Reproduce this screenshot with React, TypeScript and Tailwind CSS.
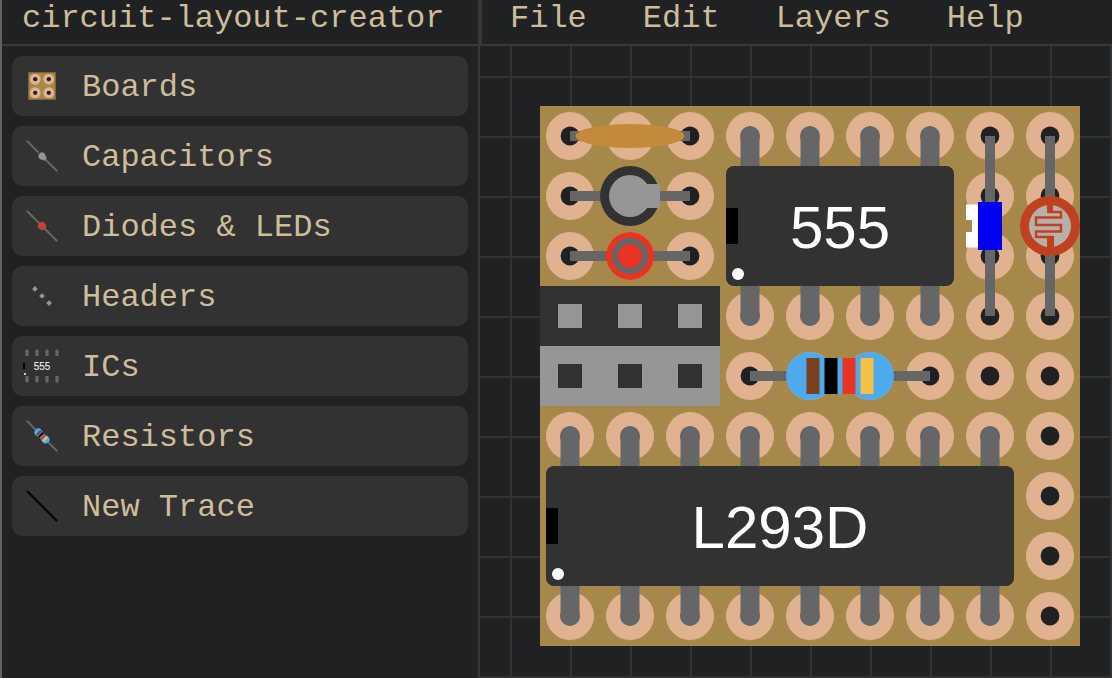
import type { ReactNode } from "react";

const PITCH = 60;
const COPPER = "#e0b290";
const BOARD = "#a6884a";
const HOLE = "#202122";
const LEAD = "#666666";
const BODY = "#323232";
const METAL = "#969696";

const range = (n: number) => Array.from({ length: n }, (_, i) => i);

type Point = { x: number; y: number };

/* ---------- Parts: the origin of each is its centre ---------- */

function Perfboard({ cols, rows }: { cols: number; rows: number }) {
  return (
    <g>
      <rect width={cols * PITCH} height={rows * PITCH} fill={BOARD} />
      {range(rows).map((r) =>
        range(cols).map((c) => (
          <g key={`${r}-${c}`}>
            <circle cx={30 + c * PITCH} cy={30 + r * PITCH} r={24} fill={COPPER} />
            <circle cx={30 + c * PITCH} cy={30 + r * PITCH} r={9.4} fill={HOLE} />
          </g>
        )),
      )}
    </g>
  );
}

function Lead({ half }: { half: number }) {
  const long = half > 100;
  return (
    <line
      x1={-half}
      x2={half}
      y1={0}
      y2={0}
      stroke={LEAD}
      strokeWidth={long ? 12 : 10}
      strokeLinecap={long ? "round" : "butt"}
    />
  );
}

function CeramicCapacitor() {
  return (
    <g>
      <Lead half={60} />
      <ellipse rx={54.5} ry={12} fill="#c38a3b" />
    </g>
  );
}

function ElectrolyticCapacitor({ half = 60 }: { half?: number }) {
  return (
    <g>
      <Lead half={half} />
      <circle r={30} fill={BODY} />
      <circle r={21} fill={METAL} />
      <rect x={10} y={-12} width={20} height={24} fill={METAL} />
    </g>
  );
}

function Led({ half = 60 }: { half?: number }) {
  return (
    <g>
      <Lead half={half} />
      <circle r={24} fill="#e93323" />
      <circle r={18} fill={LEAD} />
      <circle r={12} fill="#e93323" />
    </g>
  );
}

function Header({ body, pin }: { body: string; pin: string }) {
  return (
    <g>
      <rect x={-90} y={-30} width={180} height={60} fill={body} />
      {[-60, 0, 60].map((x) => (
        <rect key={x} x={x - 12} y={-12} width={24} height={24} fill={pin} />
      ))}
    </g>
  );
}

function Chip({ pins, label }: { pins: number; label: string }) {
  const left = -(pins * PITCH) / 2;
  return (
    <g>
      {range(pins).map((i) => {
        const x = left + 30 + i * PITCH;
        return (
          <g key={i} fill={LEAD}>
            <circle cx={x} cy={-90} r={10} />
            <rect x={x - 9.5} y={-90} width={19} height={180} />
            <circle cx={x} cy={90} r={10} />
          </g>
        );
      })}
      <rect x={left + 6} y={-60} width={pins * PITCH - 12} height={120} rx={8} fill={BODY} />
      <rect x={left + 6} y={-18} width={12} height={36} fill="#000000" />
      <circle cx={left + 18} cy={48} r={6} fill="#ffffff" />
      <text
        y={22}
        fill="#ffffff"
        fontSize={60}
        textAnchor="middle"
        className="font-['Liberation_Sans',Arial,sans-serif]"
      >
        {label}
      </text>
    </g>
  );
}

function Diode() {
  return (
    <g>
      <line y1={-90} y2={90} stroke={LEAD} strokeWidth={10} />
      <path d="M-24 -21.5H-12V21.5H-24V6H-18V-6H-24Z" fill="#ffffff" />
      <rect x={-12} y={-24} width={24} height={48} fill="#0000f5" />
    </g>
  );
}

function Photoresistor() {
  return (
    <g>
      <line y1={-90} y2={90} stroke={LEAD} strokeWidth={10} />
      <circle r={30} fill="#be4220" />
      <circle r={21} fill="#b7b0aa" />
      <path
        d="M-2 -14H11V-8.5H-14V-1H11V5.5H-14V11H3"
        fill="none"
        stroke="#be4220"
        strokeWidth={2.4}
      />
      <path d="M-3 -22H3V-13H-3ZM-3 10H4V22H-3Z" fill="#be4220" />
    </g>
  );
}

function Resistor({ half = 90 }: { half?: number }) {
  const bands = ["#7b4120", "#000000", "#e93323", "#f4c145"];
  return (
    <g>
      <Lead half={half} />
      <g fill="#4faaed">
        <circle cx={-30} r={24} />
        <circle cx={30} r={24} />
        <rect x={-30} y={-18} width={60} height={36} />
      </g>
      {bands.map((color, i) => (
        <rect key={color} x={-33.5 + i * 18} y={-18} width={13} height={36} fill={color} />
      ))}
    </g>
  );
}

/* ---------- Canvas ---------- */

const placed: (Point & { id: string; part: ReactNode })[] = [
  { id: "ceramic", x: 90, y: 30, part: <CeramicCapacitor /> },
  { id: "electrolytic", x: 90, y: 90, part: <ElectrolyticCapacitor /> },
  { id: "led", x: 90, y: 150, part: <Led /> },
  { id: "header-male", x: 90, y: 210, part: <Header body={BODY} pin={METAL} /> },
  { id: "header-female", x: 90, y: 270, part: <Header body={METAL} pin={BODY} /> },
  { id: "timer", x: 300, y: 120, part: <Chip pins={4} label="555" /> },
  { id: "diode", x: 450, y: 120, part: <Diode /> },
  { id: "photoresistor", x: 510, y: 120, part: <Photoresistor /> },
  { id: "resistor", x: 300, y: 270, part: <Resistor /> },
  { id: "driver", x: 240, y: 420, part: <Chip pins={8} label="L293D" /> },
];

function Canvas() {
  return (
    <svg className="block size-full" role="img" aria-label="Circuit layout">
      <defs>
        <pattern id="grid" width={PITCH} height={PITCH} patternUnits="userSpaceOnUse">
          <rect x={30} width={2} height={PITCH} fill="#323232" />
          <rect y={30} width={PITCH} height={2} fill="#323232" />
        </pattern>
      </defs>
      <rect width="100%" height="100%" fill="url(#grid)" />
      <g transform="translate(60 60)">
        <Perfboard cols={9} rows={9} />
        {placed.map(({ id, x, y, part }) => (
          <g key={id} transform={`translate(${x} ${y})`}>
            {part}
          </g>
        ))}
      </g>
    </svg>
  );
}

/* ---------- Sidebar ---------- */

const SIXTH = "translate(30 30) scale(0.16667)";
const SIXTH_DIAGONAL = "translate(30 30) rotate(45) scale(0.16667)";

const categories: { label: string; icon: ReactNode }[] = [
  {
    label: "Boards",
    icon: (
      <g transform="translate(16.4 16.4) scale(0.2267)">
        <Perfboard cols={2} rows={2} />
        <rect x={2} y={2} width={116} height={116} fill="none" stroke="#86662c" strokeWidth={3} />
      </g>
    ),
  },
  {
    label: "Capacitors",
    icon: (
      <g transform={SIXTH_DIAGONAL}>
        <ElectrolyticCapacitor half={125} />
      </g>
    ),
  },
  {
    label: "Diodes & LEDs",
    icon: (
      <g transform={SIXTH_DIAGONAL}>
        <Led half={125} />
      </g>
    ),
  },
  {
    label: "Headers",
    icon: (
      <g transform={SIXTH_DIAGONAL}>
        <Header body={BODY} pin={METAL} />
      </g>
    ),
  },
  {
    label: "ICs",
    icon: (
      <g transform={SIXTH}>
        <Chip pins={4} label="555" />
      </g>
    ),
  },
  {
    label: "Resistors",
    icon: (
      <g transform={SIXTH_DIAGONAL}>
        <Resistor half={125} />
      </g>
    ),
  },
  {
    label: "New Trace",
    icon: <line x1={15.5} y1={15.5} x2={44.5} y2={44.5} stroke="#000000" strokeWidth={2} strokeLinecap="round" />,
  },
];

const menus = ["File", "Edit", "Layers", "Help"];

export default function App() {
  return (
    <div className="flex h-screen overflow-hidden border-l-2 border-[#665f5b] bg-[#202122] font-['Courier_New','Liberation_Mono',monospace] text-[32px] leading-9 text-[#cdbd9b]">
      <aside className="flex w-[478px] shrink-0 flex-col border-r-2 border-[#3c3836]">
        <header className="flex h-[46px] shrink-0 items-center border-b-2 border-[#3c3836] px-5 pb-1.5">
          <h1 className="whitespace-nowrap">circuit-layout-creator</h1>
        </header>
        <ul className="flex flex-col gap-2.5 p-2.5">
          {categories.map(({ label, icon }) => (
            <li key={label}>
              <button
                type="button"
                className="flex w-full items-center gap-2.5 rounded-[10px] bg-[#323232] text-left hover:bg-[#3c3836]"
              >
                <svg className="size-[60px] shrink-0" viewBox="0 0 60 60" aria-hidden="true">
                  {icon}
                </svg>
                <span className="whitespace-nowrap pt-[3px]">{label}</span>
              </button>
            </li>
          ))}
        </ul>
      </aside>
      <div className="flex min-w-0 flex-1 flex-col">
        <nav className="flex h-[46px] shrink-0 items-center border-b-2 border-l-2 border-[#3c3836] pb-1.5">
          {menus.map((menu) => (
            <button key={menu} type="button" className="px-7 hover:text-white">
              {menu}
            </button>
          ))}
        </nav>
        <main className="min-h-0 flex-1">
          <Canvas />
        </main>
      </div>
    </div>
  );
}
